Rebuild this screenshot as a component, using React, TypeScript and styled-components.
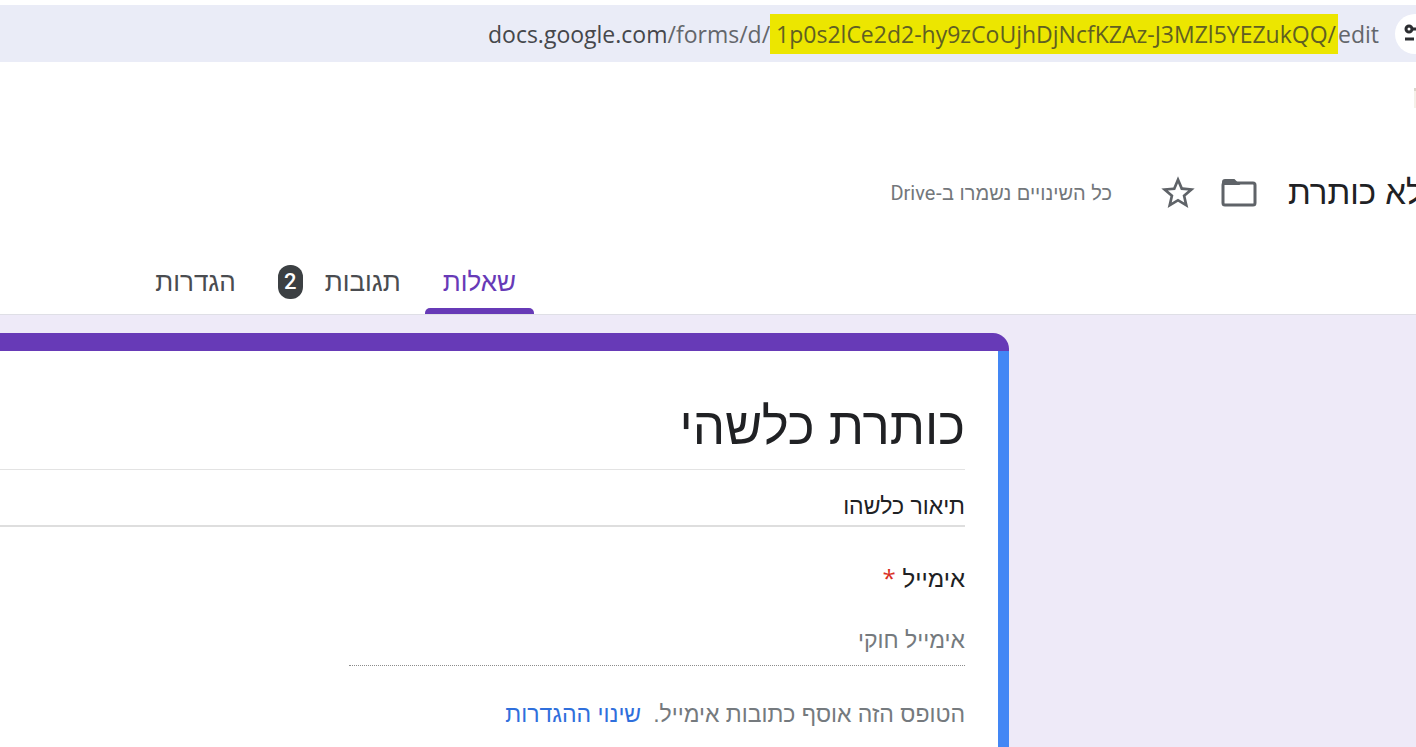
import React from "react";
import styled, { createGlobalStyle } from "styled-components";

const GlobalStyle = createGlobalStyle`
  * { box-sizing: border-box; }
  html, body, #root { height: 100%; }
  body {
    margin: 0;
    background: #ffffff;
    font-family: "Liberation Sans", "Open Sans", sans-serif;
    color: #202124;
    overflow: hidden;
  }
  button, input { font: inherit; }
`;

const Page = styled.div`
  min-height: 100%;
  display: flex;
  flex-direction: column;
  padding-top: 5px;
`;

const AddressBar = styled.div`
  height: 57px;
  flex: none;
  display: flex;
  align-items: center;
  justify-content: flex-end;
  gap: 16px;
  background: #eaecf7;
  overflow: hidden;
`;

const Url = styled.div`
  direction: ltr;
  font-family: "Open Sans", sans-serif;
  font-size: 23px;
  line-height: 40px;
  white-space: nowrap;
  color: #63666b;
`;

const Host = styled.span`
  color: #45474b;
`;

const Highlight = styled.mark`
  display: inline-block;
  padding: 0 2px 0 6px;
  background: #ece600;
  color: #605f22;
`;

const SiteInfo = styled.button`
  width: 21px;
  height: 40px;
  padding: 0 0 0 9px;
  border: 0;
  border-radius: 20px 0 0 20px;
  background: #ffffff;
  overflow: hidden;
  display: flex;
  align-items: center;

  svg { flex: none; }
`;

const Header = styled.header`
  flex: none;
  padding-top: 26px;
  border-bottom: 1px solid #dfdfe6;
`;

const AppBar = styled.div`
  display: flex;
  justify-content: flex-end;
  height: 24px;
`;

const AppMark = styled.span`
  width: 2px;
  height: 20px;
  border-top: 3px solid #d9d6cc;
  background: #f4f1ea;
`;

const TitleRow = styled.div`
  height: 64px;
  margin-top: 49px;
  display: flex;
  align-items: center;
`;

const DocTitle = styled.h1`
  width: 128px;
  margin: 0 0 0 28px;
  direction: ltr;
  overflow: hidden;
  white-space: nowrap;
  font-size: 33px;
  font-weight: 400;
  line-height: 40px;
`;

const IconButton = styled.button`
  width: 40px;
  height: 40px;
  padding: 0;
  margin-left: 22px;
  border: 0;
  background: none;
  color: #5f6368;
  display: grid;
  place-items: center;
`;

const SaveStatus = styled.span`
  margin-right: 24px;
  font-size: 20px;
  line-height: 28px;
  color: #73777b;
`;

const Latin = styled.span`
  font-family: Roboto, sans-serif;
`;

const Tabs = styled.nav`
  display: flex;
  height: 64px;
  margin-top: 25px;
  margin-right: 4px;
  padding-right: 62%;
`;

const Tab = styled.button<{ $active?: boolean }>`
  position: relative;
  display: flex;
  align-items: center;
  gap: 22px;
  padding: 0 18px;
  margin-left: 6px;
  border: 0;
  background: none;
  white-space: nowrap;
  font-size: 26px;
  font-weight: 500;
  line-height: 32px;
  color: ${(p) => (p.$active ? "#673ab7" : "#4a4c50")};

  &::after {
    content: "";
    display: ${(p) => (p.$active ? "block" : "none")};
    position: absolute;
    left: 0;
    right: 0;
    bottom: 0;
    height: 6px;
    border-radius: 5px 5px 0 0;
    background: #673ab7;
  }
`;

const Badge = styled.span`
  width: 25px;
  height: 34px;
  border-radius: 12px;
  background: #3c4043;
  color: #ffffff;
  font-family: Roboto, sans-serif;
  font-size: 22px;
  font-weight: 500;
  line-height: 34px;
  text-align: center;
`;

const Canvas = styled.main`
  flex: 1;
  display: flex;
  padding: 18px 407px 0 0;
  background: #eeeaf8;
`;

const Card = styled.section`
  flex: 1;
  display: flex;
  flex-direction: column;
  border-top-right-radius: 16px;
  overflow: hidden;
  background: #ffffff;
`;

const CardStripe = styled.div`
  height: 18px;
  flex: none;
  background: #673ab7;
`;

const CardBody = styled.div`
  flex: 1;
  padding: 40px 33px 0 0;
  border-right: 11px solid #4387f5;
`;

const FormTitle = styled.input`
  display: block;
  width: 100%;
  height: 79px;
  padding: 0 0 8px;
  border: 0;
  border-bottom: 1px solid #e3e3e3;
  outline: 0;
  background: none;
  color: #202124;
  font-size: 51px;
`;

const FormDescription = styled.input`
  display: block;
  width: 100%;
  height: 39px;
  margin-top: 18px;
  padding: 0;
  border: 0;
  border-bottom: 2px solid #dedede;
  outline: 0;
  background: none;
  color: #202124;
  font-size: 23px;
`;

const QuestionLabel = styled.label`
  display: block;
  margin-top: 36px;
  font-size: 24px;
  font-weight: 500;
  line-height: 32px;
`;

const Required = styled.span`
  font-family: "Open Sans", sans-serif;
  font-weight: 400;
  line-height: 24px;
  color: #d93025;
`;

const EmailInput = styled.input`
  display: block;
  width: 616px;
  max-width: 100%;
  height: 50px;
  margin-top: 21px;
  padding: 0;
  border: 0;
  border-bottom: 1px dotted #8c8c8c;
  outline: 0;
  background: none;
  font-size: 23px;

  &::placeholder { color: #757a7e; opacity: 1; }
`;

const Notice = styled.p`
  margin: 32px 0 0;
  font-size: 23px;
  line-height: 32px;
  color: #757a7e;
`;

const SettingsLink = styled.a`
  margin-right: 12px;
  color: #2f6fdc;
  font-weight: 500;
  text-decoration: none;
`;

function TuneIcon() {
  return (
    <svg width="24" height="24" viewBox="0 0 24 24" fill="none" stroke="#2b2d30" strokeWidth="3">
      <circle cx="5" cy="7" r="3" />
      <path d="M8 7h14M1 17h9" />
      <circle cx="18" cy="17" r="3" />
    </svg>
  );
}

function FolderIcon() {
  return (
    <svg width="42" height="40" viewBox="0 0 42 40" fill="none" stroke="currentColor" strokeWidth="3">
      <rect x="5" y="10" width="32" height="22" rx="2" />
      <path d="M5 10V9q0-2 2-2h9l4 4H5z" fill="currentColor" strokeWidth="2" />
    </svg>
  );
}

function StarIcon() {
  return (
    <svg width="40" height="40" viewBox="0 0 24 24" fill="currentColor">
      <path d="M22 9.240l-7.190-.62L12 2 9.190 8.630 2 9.240l5.460 4.730L5.820 21 12 17.270 18.180 21l-1.630-7.030L22 9.240zM12 15.400l-3.760 2.270 1-4.280-3.320-2.880 4.380-.38L12 6.100l1.710 4.040 4.380.38-3.320 2.880 1 4.280L12 15.400z" />
    </svg>
  );
}

export default function App() {
  return (
    <>
      <GlobalStyle />
      <Page>
        <AddressBar>
          <Url>
            <Host>docs.google.com</Host>/forms/d/
            <Highlight>1p0s2lCe2d2-hy9zCoUjhDjNcfKZAz-J3MZl5YEZukQQ/</Highlight>edit
          </Url>
          <SiteInfo aria-label="Site information">
            <TuneIcon />
          </SiteInfo>
        </AddressBar>
        <Header>
          <AppBar>
            <AppMark />
          </AppBar>
          <TitleRow dir="rtl">
            <DocTitle>לא כותרת</DocTitle>
            <IconButton aria-label="העברה לתיקייה">
              <FolderIcon />
            </IconButton>
            <IconButton aria-label="סימון בכוכב">
              <StarIcon />
            </IconButton>
            <SaveStatus>
              כל השינויים נשמרו ב-<Latin>Drive</Latin>
            </SaveStatus>
          </TitleRow>
          <Tabs dir="rtl">
            <Tab $active>שאלות</Tab>
            <Tab>
              תגובות
              <Badge>2</Badge>
            </Tab>
            <Tab>הגדרות</Tab>
          </Tabs>
        </Header>
        <Canvas>
          <Card dir="rtl">
            <CardStripe />
            <CardBody>
              <FormTitle aria-label="כותרת הטופס" defaultValue="כותרת כלשהי" />
              <FormDescription aria-label="תיאור הטופס" defaultValue="תיאור כלשהו" />
              <QuestionLabel htmlFor="email">
                אימייל <Required>*</Required>
              </QuestionLabel>
              <EmailInput id="email" type="email" dir="rtl" placeholder="אימייל חוקי" />
              <Notice>
                הטופס הזה אוסף כתובות אימייל.
                <SettingsLink href="#settings">שינוי ההגדרות</SettingsLink>
              </Notice>
            </CardBody>
          </Card>
        </Canvas>
      </Page>
    </>
  );
}
